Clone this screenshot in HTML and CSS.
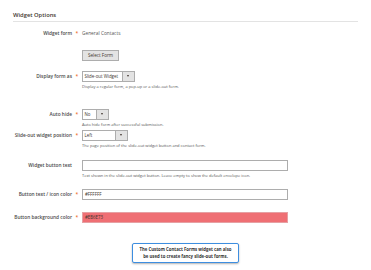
FILE: index.html
```html
<!DOCTYPE html>
<html>
<head>
<meta charset="utf-8">
<link rel="stylesheet" href="styles.css">
</head>
<body>
<div class="page">
  <div class="title">Widget Options</div>
  <div class="form">
    <div class="row r1">
      <div class="label">Widget form</div>
      <div class="req">*</div>
      <div class="control">
        <div class="value">General Contacts</div>
        <div class="btn">Select Form</div>
      </div>
    </div>
    <div class="row r2">
      <div class="label">Display form as</div>
      <div class="req">*</div>
      <div class="control">
        <div class="select w53"><span class="sel-text">Slide-out Widget</span><span class="arrow"></span></div>
        <div class="note">Display a regular form, a pop-up or a slide-out form.</div>
      </div>
    </div>
    <div class="row r3">
      <div class="label">Auto hide</div>
      <div class="req">*</div>
      <div class="control">
        <div class="select w27"><span class="sel-text">No</span><span class="arrow"></span></div>
        <div class="note">Auto hide form after successful submission.</div>
      </div>
    </div>
    <div class="row r4">
      <div class="label">Slide-out widget position</div>
      <div class="req">*</div>
      <div class="control">
        <div class="select w46"><span class="sel-text">Left</span><span class="arrow"></span></div>
        <div class="note">The page position of the slide-out widget button and contact form.</div>
      </div>
    </div>
    <div class="row r5">
      <div class="label">Widget button text</div>
      <div class="req"></div>
      <div class="control">
        <div class="input"></div>
        <div class="note">Text shown in the slide-out widget button. Leave empty to show the default envelope icon.</div>
      </div>
    </div>
    <div class="row r6">
      <div class="label">Button text / icon color</div>
      <div class="req">*</div>
      <div class="control">
        <div class="input">#FFFFFF</div>
      </div>
    </div>
    <div class="row r7">
      <div class="label">Button background color</div>
      <div class="req">*</div>
      <div class="control">
        <div class="input red">#EB6E73</div>
      </div>
    </div>
  </div>
  <div class="tip-wrap">
    <div class="tip">The Custom Contact Forms widget can also<br>be used to create fancy slide-out forms.</div>
  </div>
</div>
</body>
</html>
```

FILE: styles.css
```css
html, body {
  margin: 0;
  padding: 0;
  background: #ffffff;
}
.page {
  width: 371px;
  height: 270px;
  font-family: "Open Sans", "Liberation Sans", sans-serif;
  color: #303030;
  padding: 0 13px;
  box-sizing: border-box;
  overflow: hidden;
}
.title {
  font-size: 5.8px;
  font-weight: 600;
  color: #41362f;
  line-height: 8px;
  padding-top: 11px;
  padding-bottom: 2px;
  border-bottom: 1px solid #e3e3e3;
  width: 345px;
}
.row {
  display: flex;
  align-items: flex-start;
}
.label {
  width: 59px;
  text-align: right;
  font-size: 4.8px;
  font-weight: 600;
  color: #4a4a4a;
  line-height: 11px;
  white-space: nowrap;
}
.req {
  width: 10px;
  text-align: center;
  color: #eb5202;
  font-size: 5px;
  line-height: 11px;
}
.control {
  display: flex;
  flex-direction: column;
  align-items: flex-start;
}
.value {
  font-size: 4.8px;
  line-height: 11px;
  color: #555;
}
.btn {
  margin-top: 10.5px;
  width: 37px;
  height: 11px;
  box-sizing: border-box;
  background: #e3e3e3;
  border: 1px solid #adadad;
  font-size: 4.6px;
  line-height: 9px;
  text-align: center;
  color: #41362f;
}
.select {
  display: flex;
  height: 11px;
  box-sizing: border-box;
  border: 1px solid #adadad;
  background: #fff;
  font-size: 4.4px;
  color: #41362f;
}
.w53 { width: 53px; }
.w27 { width: 27px; }
.w46 { width: 46px; }
.sel-text {
  flex: 1;
  padding-left: 1.5px;
  line-height: 9px;
  white-space: nowrap;
}
.arrow {
  width: 11px;
  flex: none;
  background: #e3e3e3;
  border-left: 1px solid #adadad;
  position: relative;
}
.arrow::after {
  content: "";
  position: absolute;
  left: 4px;
  top: 3.5px;
  border-left: 1.5px solid transparent;
  border-right: 1.5px solid transparent;
  border-top: 2px solid #41362f;
}
.note {
  font-size: 4px;
  line-height: 6px;
  margin-top: 2px;
  white-space: nowrap;
  color: #555;
}
.input {
  width: 206px;
  height: 11px;
  box-sizing: border-box;
  border: 1px solid #adadad;
  background: #fff;
  font-size: 4.4px;
  line-height: 9px;
  padding-left: 2px;
  color: #41362f;
}
.input.red {
  background: #ef6f74;
  border-color: #e6a0a3;
}
.r1 { margin-top: 6px; }
.r2 { margin-top: 10px; }
.r3 { margin-top: 19px; }
.r4 { margin-top: 2px; }
.r5 { margin-top: 11px; }
.r6 { margin-top: 10px; }
.r7 { margin-top: 12px; }
.tip-wrap {
  margin-top: 18px;
  padding-left: 119px;
}
.tip {
  display: inline-block;
  width: 107px;
  box-sizing: border-box;
  border: 1px solid #3d8ee0;
  border-radius: 2px;
  box-shadow: 0 1px 2px rgba(0,0,0,0.3);
  background: #fff;
  font-size: 4.3px;
  font-weight: 700;
  line-height: 6.5px;
  text-align: center;
  padding: 2.5px 2px;
  color: #333;
}
```
